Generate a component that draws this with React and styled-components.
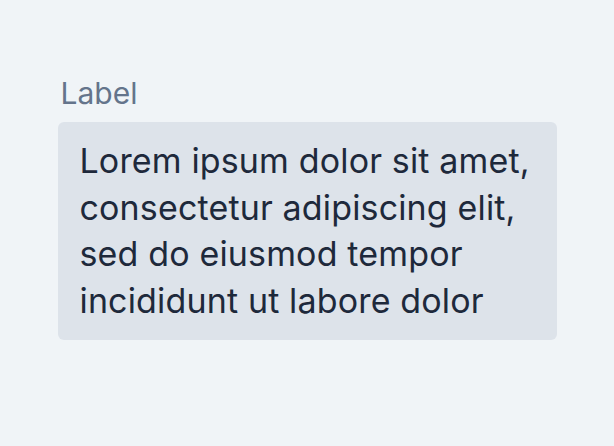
import React from 'react'
import styled, { createGlobalStyle } from 'styled-components'

const GlobalStyle = createGlobalStyle`
  body {
    margin: 0;
    background: #f0f4f7;
    font-family: Inter, "Noto Sans", sans-serif;
  }
`

const Page = styled.div`
  min-height: 446px;
  display: flex;
  justify-content: center;
  padding-top: 75px;
  box-sizing: border-box;
`

const Field = styled.label`
  width: 499px;
  display: flex;
  flex-direction: column;
  gap: 11px;
`

const Label = styled.span`
  color: #64748b;
  font-size: 30px;
  line-height: 36px;
  padding-left: 3px;
`

const Textarea = styled.div`
  background: #dde3ea;
  border-radius: 6px;
  padding: 16px 22px;
  color: #1e293b;
  font-size: 34px;
  line-height: 46.5px;
  letter-spacing: 0.15px;
`

const App = () => {
  return (
    <>
      <GlobalStyle />
      <Page>
        <Field>
          <Label>Label</Label>
          <Textarea>
            Lorem ipsum dolor sit amet, consectetur adipiscing elit, sed do eiusmod tempor incididunt ut labore dolor
          </Textarea>
        </Field>
      </Page>
    </>
  )
}

export default App
